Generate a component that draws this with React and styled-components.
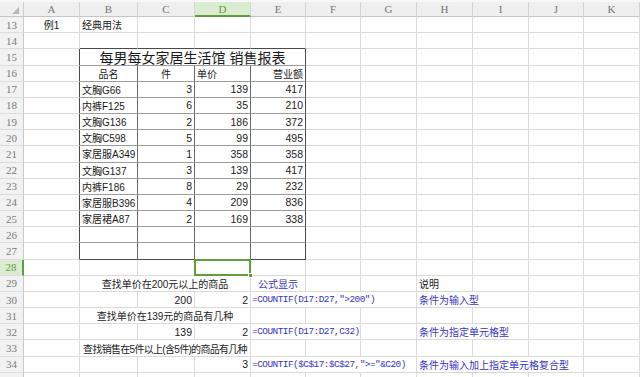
import React from 'react';
import styled, { createGlobalStyle, css } from 'styled-components';

const COLS = ['A', 'B', 'C', 'D', 'E', 'F', 'G', 'H', 'I', 'J', 'K'];
const GRID = '#dadada';
const EDGE = '#4a4a4a';
const INNER_V = '#6a6a6a';
const INNER_H = '#9c9c9c';
const GREEN = '#5f9e3a';
const BLUE = '#3535c8';

const GlobalStyle = createGlobalStyle`
  *, *::before, *::after { box-sizing: border-box; }
  html, body { margin: 0; padding: 0; background: #fff; overflow: hidden; }
  body { font-family: "Liberation Sans", "Noto Sans CJK SC", sans-serif; }
`;

const Page = styled.div`
  width: 640px;
  height: 377px;
  overflow: hidden;
  background: #fff;
`;

const TopStrip = styled.div`
  height: 2px;
  background: #f8f8f8;
`;

const Sheet = styled.div`
  display: grid;
  grid-template-columns: 24px 56px 58px 57px 56px 55px 55px 56px 56px 56px 55px 56px;
  grid-template-rows: 15px;
  grid-auto-rows: 16.18px;
`;

const Corner = styled.div`
  background: #efefef;
  border-right: 1px solid #cfcfcf;
  border-bottom: 1px solid #c6c6c6;
  display: flex;
  align-items: flex-end;
  justify-content: flex-end;
  padding: 0 4px 2px 0;
`;

const ColHead = styled.div`
  background: ${p => (p.$active ? '#dcecd2' : '#efefef')};
  color: ${p => (p.$active ? GREEN : '#767676')};
  border-right: 1px solid #d4d4d4;
  border-bottom: ${p => (p.$active ? `2px solid ${GREEN}` : '1px solid #c6c6c6')};
  font: 11px "Liberation Serif", serif;
  display: flex;
  align-items: center;
  justify-content: center;
`;

const RowHead = styled.div`
  background: ${p => (p.$active ? '#dcecd2' : '#f2f2f2')};
  color: ${p => (p.$active ? GREEN : '#7a7a7a')};
  border-right: ${p => (p.$active ? `2px solid ${GREEN}` : '1px solid #c8c8c8')};
  border-bottom: 1px solid #dcdcdc;
  font: 11px "Liberation Serif", serif;
  display: flex;
  align-items: center;
  justify-content: center;
`;

const Cell = styled.div`
  grid-column: span ${p => p.$span || 1};
  border-right: ${p => p.$right};
  border-bottom: ${p => p.$bottom};
  display: flex;
  align-items: center;
  justify-content: ${p =>
    p.$align === 'center' ? 'center' : p.$align === 'right' ? 'flex-end' : 'flex-start'};
  padding: 0 2px;
  font-size: ${p => (p.$kind === 'title' ? '14px' : p.$kind === 'num' ? '10.5px' : '10px')};
  letter-spacing: ${p => (p.$tight ? '-0.7px' : 'normal')};
  color: ${p => (p.$blue ? BLUE : '#1a1a1a')};
  white-space: nowrap;
  overflow: visible;
  position: relative;
  ${p =>
    p.$kind === 'formula' &&
    css`
      font-family: "Liberation Mono", monospace;
      font-size: 9.4px;
      letter-spacing: -0.5px;
      padding-left: 1px;
    `}
  ${p =>
    p.$selected &&
    css`
      &::after {
        content: '';
        position: absolute;
        left: -1px;
        top: -1px;
        right: -1px;
        bottom: -1px;
        border: 2px solid ${GREEN};
      }
      &::before {
        content: '';
        position: absolute;
        right: -3px;
        bottom: -3px;
        width: 5px;
        height: 5px;
        background: ${GREEN};
        border: 1px solid #fff;
        z-index: 2;
      }
    `}
`;

const rows = {
  13: [
    { col: 'A', text: '例1', align: 'center' },
    { col: 'B', text: '经典用法' },
  ],
  15: [{ col: 'B', span: 4, text: '每男每女家居生活馆 销售报表', align: 'center', kind: 'title' }],
  16: [
    { col: 'B', text: '品名', align: 'center' },
    { col: 'C', text: '件', align: 'center' },
    { col: 'D', text: '单价' },
    { col: 'E', text: '营业额', align: 'right' },
  ],
  29: [
    { col: 'B', span: 3, text: '查找单价在200元以上的商品', align: 'center' },
    { col: 'E', text: '公式显示', align: 'center', blue: true },
    { col: 'H', text: '说明' },
  ],
  30: [
    { col: 'C', text: '200', align: 'right', kind: 'num' },
    { col: 'D', text: '2', align: 'right', kind: 'num' },
    { col: 'E', span: 3, text: '=COUNTIF(D17:D27,">200")', kind: 'formula', blue: true },
    { col: 'H', span: 2, text: '条件为输入型', blue: true },
  ],
  31: [{ col: 'B', span: 3, text: '查找单价在139元的商品有几种', align: 'center' }],
  32: [
    { col: 'C', text: '139', align: 'right', kind: 'num' },
    { col: 'D', text: '2', align: 'right', kind: 'num' },
    { col: 'E', span: 2, text: '=COUNTIF(D17:D27,C32)', kind: 'formula', blue: true },
    { col: 'H', span: 2, text: '条件为指定单元格型', blue: true },
  ],
  33: [
    { col: 'B', span: 3, text: '查找销售在5件以上(含5件)的商品有几种', align: 'center', tight: true },
  ],
  34: [
    { col: 'D', text: '3', align: 'right', kind: 'num' },
    { col: 'E', span: 3, text: '=COUNTIF($C$17:$C$27,">="&C20)', kind: 'formula', blue: true },
    { col: 'H', span: 3, text: '条件为输入加上指定单元格复合型', blue: true },
  ],
};

const sales = [
  ['文胸G66', 3, 139, 417],
  ['内裤F125', 6, 35, 210],
  ['文胸G136', 2, 186, 372],
  ['文胸C598', 5, 99, 495],
  ['家居服A349', 1, 358, 358],
  ['文胸G137', 3, 139, 417],
  ['内裤F186', 8, 29, 232],
  ['家居服B396', 4, 209, 836],
  ['家居裙A87', 2, 169, 338],
];

sales.forEach(([name, qty, price, total], i) => {
  rows[17 + i] = [
    { col: 'B', text: name },
    { col: 'C', text: qty, align: 'right', kind: 'num' },
    { col: 'D', text: price, align: 'right', kind: 'num' },
    { col: 'E', text: total, align: 'right', kind: 'num' },
  ];
});

const inTable = n => n >= 15 && n <= 27;

function borders(n, start, end) {
  let right = `1px solid ${GRID}`;
  let bottom = `1px solid ${GRID}`;
  if (inTable(n)) {
    if (end === 0 || end === 4) right = `1px solid ${EDGE}`;
    else if (start >= 1 && end <= 3) right = `1px solid ${INNER_V}`;
    if (start >= 1 && end <= 4) bottom = `1px solid ${n === 27 ? EDGE : INNER_H}`;
  }
  if (n === 14 && start >= 1 && end <= 4) bottom = `1px solid ${EDGE}`;
  return { right, bottom };
}

function buildRow(n) {
  const spec = rows[n] || [];
  const out = [];
  let i = 0;
  while (i < COLS.length) {
    const hit = spec.find(c => COLS.indexOf(c.col) === i);
    const span = hit ? hit.span || 1 : 1;
    const { right, bottom } = borders(n, i, i + span - 1);
    out.push(
      <Cell
        key={`${n}-${i}`}
        $span={span}
        $right={right}
        $bottom={bottom}
        $align={hit && hit.align}
        $kind={hit && hit.kind}
        $blue={hit && hit.blue}
        $tight={hit && hit.tight}
        $selected={n === 28 && i === 3}
      >
        {hit ? hit.text : ''}
      </Cell>
    );
    i += span;
  }
  return out;
}

// row 35 only peeks in at the bottom edge, its number is below the fold
const rowNumbers = Array.from({ length: 23 }, (_, k) => 13 + k);

export default function App() {
  return (
    <Page>
      <GlobalStyle />
      <TopStrip />
      <Sheet>
        <Corner>
          <svg width="7" height="7" viewBox="0 0 7 7">
            <polygon points="7,0 7,7 0,7" fill="#b9b9b9" />
          </svg>
        </Corner>
        {COLS.map(c => (
          <ColHead key={c} $active={c === 'D'}>
            {c}
          </ColHead>
        ))}
        {rowNumbers.map(n => (
          <React.Fragment key={n}>
            <RowHead $active={n === 28}>{n < 35 ? n : ''}</RowHead>
            {buildRow(n)}
          </React.Fragment>
        ))}
      </Sheet>
    </Page>
  );
}
